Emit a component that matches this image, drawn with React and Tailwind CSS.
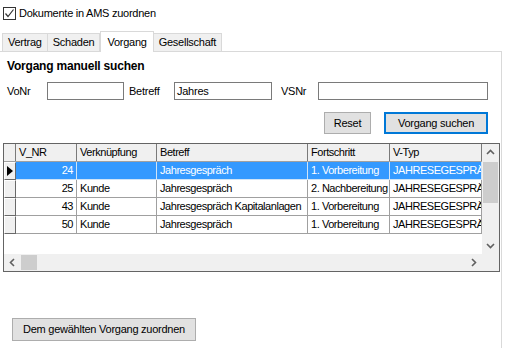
import React from 'react'

const rows = [
  { nr: '24', verk: '', betreff: 'Jahresgespräch', fort: '1. Vorbereitung', typ: 'JAHRESEGESPRÄCH', sel: true },
  { nr: '25', verk: 'Kunde', betreff: 'Jahresgespräch', fort: '2. Nachbereitung', typ: 'JAHRESEGESPRÄCH' },
  { nr: '43', verk: 'Kunde', betreff: 'Jahresgespräch Kapitalanlagen', fort: '1. Vorbereitung', typ: 'JAHRESEGESPRÄCH' },
  { nr: '50', verk: 'Kunde', betreff: 'Jahresgespräch', fort: '1. Vorbereitung', typ: 'JAHRESEGESPRÄCH' },
]

function Chevron({ dir }) {
  const pts = {
    up: '1,6 4.5,2.5 8,6',
    down: '1,3 4.5,6.5 8,3',
    left: '6,1 2.5,4.5 6,8',
    right: '3,1 6.5,4.5 3,8',
  }[dir]
  return (
    <svg width="9" height="9" viewBox="0 0 9 9" fill="none" stroke="#606060" strokeWidth="1.6">
      <polyline points={pts} />
    </svg>
  )
}

function Tab({ label, active }) {
  if (active) {
    return (
      <div className="relative z-10 -mb-px h-[21px] px-[6px] bg-white border border-b-0 border-[#d9d9d9] flex items-center">
        {label}
      </div>
    )
  }
  return (
    <div className="h-[18px] px-[5px] bg-[#f0f0f0] border border-b-0 border-[#d9d9d9] -ml-px first:ml-0 flex items-center">
      {label}
    </div>
  )
}

function Btn({ children, className = '' }) {
  return (
    <button className={`bg-[#e1e1e1] border border-[#adadad] flex items-center justify-center ${className}`}>
      {children}
    </button>
  )
}

export default function App() {
  return (
    <div className="w-[505px] h-[348px] bg-white overflow-hidden text-[11px] tracking-[-0.25px] text-black font-['Liberation_Sans',sans-serif]">
      {/* Checkbox */}
      <div className="pt-[7px] pl-[3px] flex items-center gap-[3px] h-[20px]">
        <div className="w-[13px] h-[13px] border border-[#333] bg-white flex items-center justify-center">
          <svg width="11" height="11" viewBox="0 0 11 11" fill="none" stroke="#333" strokeWidth="1.2">
            <polyline points="1.5,5.5 4,8.5 9.5,1.5" />
          </svg>
        </div>
        <span>Dokumente in AMS zuordnen</span>
      </div>

      {/* Tabs */}
      <div className="mt-[11px] pl-[2px] flex items-end h-[20px]">
        <Tab label="Vertrag" />
        <Tab label="Schaden" />
        <Tab label="Vorgang" active />
        <Tab label="Gesellschaft" />
      </div>

      {/* Panel */}
      <div className="w-[502px] h-[400px] border-t border-r border-[#d9d9d9]">
        <div className="pl-[7px] pt-[7px]">
          <div className="font-bold text-[12px] tracking-[-0.2px] h-[15px] leading-[15px]">Vorgang manuell suchen</div>

          <div className="mt-[8px] flex items-center h-[18px]">
            <span className="w-[40px]">VoNr</span>
            <div className="w-[77px] h-[18px] border border-[#7a7a7a] bg-white" />
            <span className="ml-[5px] w-[45px]">Betreff</span>
            <div className="w-[98px] h-[18px] border border-[#7a7a7a] bg-white px-[2px] leading-[16px]">Jahres</div>
            <span className="ml-[9px] w-[37px]">VSNr</span>
            <div className="w-[170px] h-[18px] border border-[#7a7a7a] bg-white" />
          </div>

          <div className="mt-[12px] pl-[317px] flex gap-[13px]">
            <Btn className="w-[47px] h-[22px]">Reset</Btn>
            <button className="w-[104px] h-[22px] bg-[#e1e1e1] border-2 border-[#0078d7] flex items-center justify-center">
              Vorgang suchen
            </button>
          </div>
        </div>

        {/* Grid */}
        <div className="mt-[9px] ml-[3px] w-[497px] h-[129px] border border-[#646464] flex flex-col tracking-[-0.45px]">
          <div className="flex h-[110px]">
            <div className="w-[478px] flex flex-col">
              {/* Header */}
              <div className="flex h-[18px] bg-[#f0f0f0] border-b border-[#a0a0a0]">
                <div className="w-[12px] border-r border-[#7a7a7a]" />
                {[['V_NR', 61], ['Verknüpfung', 80], ['Betreff', 151], ['Fortschritt', 82], ['V-Typ', 92]].map(([h, w]) => (
                  <div key={h} style={{ width: w }} className="border-r border-[#7a7a7a] pl-[3px] leading-[17px] overflow-hidden whitespace-nowrap">
                    {h}
                  </div>
                ))}
              </div>
              {rows.map(r => {
                const cell = r.sel
                  ? 'bg-[#3399ff] text-white border-r border-b border-[#cfe4f7]'
                  : 'bg-white border-r border-b border-[#a0a0a0]'
                return (
                  <div key={r.nr} className="flex h-[18px] leading-[17px] whitespace-nowrap">
                    <div className="w-[12px] bg-[#f0f0f0] border-t border-l border-t-white border-l-white border-r border-b border-r-[#696969] border-b-[#696969] flex items-center justify-center">
                      {r.sel && (
                        <svg width="6" height="10" viewBox="0 0 6 10"><polygon points="0,0 6,5 0,10" fill="#000" /></svg>
                      )}
                    </div>
                    <div className={`w-[61px] text-right pr-[3px] overflow-hidden ${cell}`}>{r.nr}</div>
                    <div className={`w-[80px] pl-[3px] overflow-hidden ${cell}`}>{r.verk}</div>
                    <div className={`w-[151px] pl-[3px] overflow-hidden ${cell}`}>{r.betreff}</div>
                    <div className={`w-[82px] pl-[3px] overflow-hidden ${cell}`}>{r.fort}</div>
                    <div className={`w-[92px] pl-[3px] overflow-hidden ${cell}`}>{r.typ}</div>
                  </div>
                )
              })}
            </div>
            {/* Vertical scrollbar */}
            <div className="w-[17px] bg-[#f0f0f0] flex flex-col items-center">
              <div className="h-[17px] flex items-center justify-center"><Chevron dir="up" /></div>
              <div className="mt-px w-[15px] h-[41px] bg-[#cdcdcd]" />
              <div className="flex-1" />
              <div className="h-[17px] flex items-center justify-center"><Chevron dir="down" /></div>
            </div>
          </div>
          {/* Horizontal scrollbar */}
          <div className="flex h-[17px] bg-[#f0f0f0]">
            <div className="w-[478px] flex items-center">
              <div className="w-[17px] flex items-center justify-center"><Chevron dir="left" /></div>
              <div className="w-[16px] h-[15px] bg-[#cdcdcd]" />
              <div className="flex-1" />
              <div className="w-[17px] flex items-center justify-center"><Chevron dir="right" /></div>
            </div>
            <div className="w-[17px]" />
          </div>
        </div>

        <div className="mt-[46px] ml-[12px]">
          <Btn className="w-[184px] h-[23px]">Dem gewählten Vorgang zuordnen</Btn>
        </div>
      </div>
    </div>
  )
}
